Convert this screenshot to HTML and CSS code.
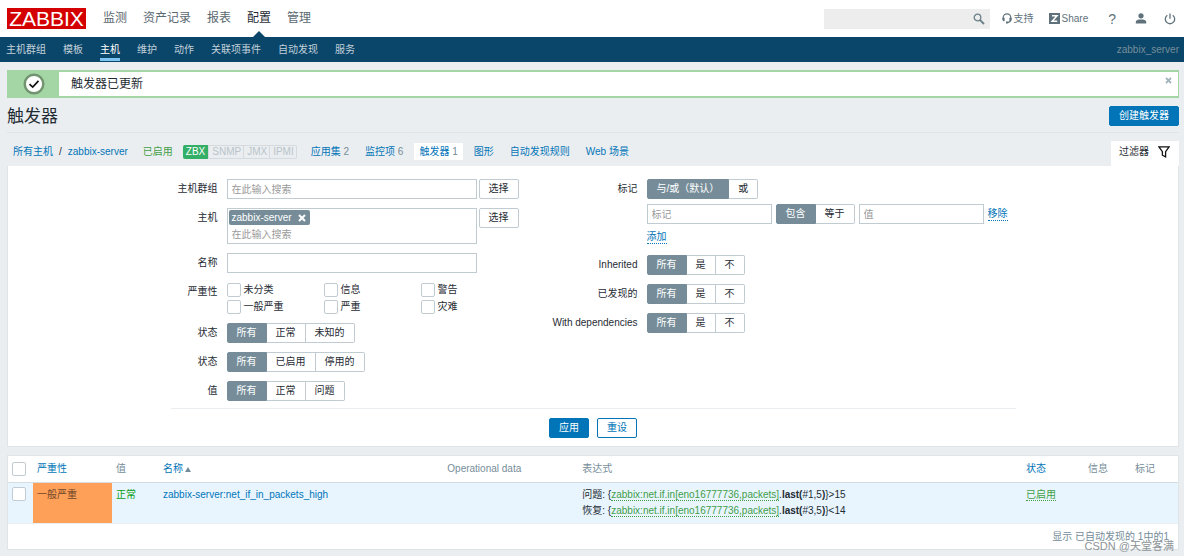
FILE: index.html
```html
<!DOCTYPE html>
<html lang="zh-CN">
<head>
<meta charset="utf-8">
<title>触发器</title>
<link rel="stylesheet" href="styles.css">
</head>
<body>
<header class="top">
  <a class="logo" href="#">ZABBIX</a>
  <nav class="menu">
    <a href="#">监测</a><a href="#">资产记录</a><a href="#">报表</a><a class="current" href="#">配置</a><a href="#">管理</a>
  </nav>
  <form class="search">
    <input type="search" aria-label="搜索">
    <button type="button" aria-label="搜索"><svg width="12" height="12" viewBox="0 0 12 12"><circle cx="4.5" cy="4.5" r="3.3" fill="none" stroke="currentColor" stroke-width="1.3"/><path d="M7 7l4 4" stroke="currentColor" stroke-width="1.8"/></svg></button>
  </form>
  <div class="tools">
    <a href="#"><svg width="10" height="11" viewBox="0 0 10 11"><path d="M1.2 6.5V4.6a3.8 3.8 0 0 1 7.6 0v2.2c0 1.600-1 2.500-3.300 2.700" fill="none" stroke="currentColor" stroke-width="1.200"/><path d="M.4 4.800h2.200v3.400H1.600L.4 7zM7.400 4.800h2.200V7L8.400 8.200h-1zM4 8.600h2.200v1.800H4z" fill="currentColor"/></svg><span>支持</span></a>
    <a href="#"><svg width="11" height="11" viewBox="0 0 11 11"><path fill="currentColor" d="M0 0h11v11H0z"/><path d="M3 2.800h5L3.200 8.200H8.200" fill="none" stroke="#fff" stroke-width="1.500"/></svg><span>Share</span></a>
    <a class="help" href="#" aria-label="帮助">?</a>
    <a href="#" aria-label="用户"><svg width="12" height="11" viewBox="0 0 12 11"><circle cx="6" cy="2.800" r="2.600" fill="currentColor"/><path d="M.8 10.500V8.800C.8 7 3.200 6.500 6 6.500s5.200.5 5.200 2.300v1.700z" fill="currentColor"/></svg></a>
    <a href="#" aria-label="退出"><svg width="12" height="12" viewBox="0 0 12 12"><path d="M3.300 2.200a4.700 4.700 0 1 0 5.400 0M6 .5v5.200" fill="none" stroke="currentColor" stroke-width="1.300"/></svg></a>
  </div>
</header>
<nav class="submenu">
  <a href="#">主机群组</a><a href="#">模板</a><a class="current" href="#">主机</a><a href="#">维护</a><a href="#">动作</a><a href="#">关联项事件</a><a href="#">自动发现</a><a href="#">服务</a>
  <span class="server">zabbix_server</span>
</nav>
<main>
  <div class="message" role="status">
    <div class="message-icon"><svg width="22" height="22" viewBox="0 0 22 22"><circle cx="11" cy="11" r="9.300" fill="#fff" stroke="#71936f" stroke-width="2.400"/><path d="M6.500 11.200l3.200 2.900 5.800-6.300" fill="none" stroke="#111" stroke-width="1.700"/></svg></div>
    <p>触发器已更新</p>
    <button type="button" class="close" aria-label="关闭"><svg width="7" height="7" viewBox="0 0 7 7"><path d="M1 1l5 5M6 1L1 6" stroke="currentColor" stroke-width="1.800"/></svg></button>
  </div>
  <div class="title">
    <h1>触发器</h1>
    <button type="button" class="btn primary">创建触发器</button>
  </div>
  <div class="crumbs">
    <div class="path"><a href="#">所有主机</a><span>/</span><a href="#">zabbix-server</a></div>
    <span class="green">已启用</span>
    <div class="ifaces"><span class="on">ZBX</span><span>SNMP</span><span>JMX</span><span>IPMI</span></div>
    <nav class="links">
      <a href="#">应用集 <b>2</b></a><a href="#">监控项 <b>6</b></a><a class="current" href="#">触发器 <b>1</b></a><a href="#">图形</a><a href="#">自动发现规则</a><a href="#">Web 场景</a>
    </nav>
    <button type="button" class="filter-tab">过滤器<svg width="12" height="12" viewBox="0 0 12 12"><path d="M.9.800h10.200L7.600 5.700v5.200L4.400 9.200V5.700z" fill="none" stroke="#111" stroke-width="1.300"/></svg></button>
  </div>
  <form class="filter">
    <div class="columns">
      <div class="fields">
        <label class="name" for="groups">主机群组</label>
        <div class="line"><div class="multi"><input id="groups" type="text" placeholder="在此输入搜索"></div><button type="button" class="btn plain">选择</button></div>
        <label class="name" for="hosts">主机</label>
        <div class="line"><div class="multi"><span class="tag">zabbix-server<button type="button" aria-label="移除"><svg width="8" height="8" viewBox="0 0 8 8"><path d="M1 1l6 6M7 1L1 7" stroke="currentColor" stroke-width="2"/></svg></button></span><input id="hosts" type="text" placeholder="在此输入搜索"></div><button type="button" class="btn plain">选择</button></div>
        <label class="name" for="name">名称</label>
        <div class="line"><div class="multi"><input id="name" type="text"></div></div>
        <span class="name">严重性</span>
        <div class="checks">
          <label><input type="checkbox">未分类</label><label><input type="checkbox">信息</label><label><input type="checkbox">警告</label>
          <label><input type="checkbox">一般严重</label><label><input type="checkbox">严重</label><label><input type="checkbox">灾难</label>
        </div>
        <span class="name">状态</span>
        <div class="seg"><label><input type="radio" name="state" checked>所有</label><label><input type="radio" name="state">正常</label><label><input type="radio" name="state">未知的</label></div>
        <span class="name">状态</span>
        <div class="seg"><label><input type="radio" name="status" checked>所有</label><label><input type="radio" name="status">已启用</label><label><input type="radio" name="status">停用的</label></div>
        <span class="name">值</span>
        <div class="seg"><label><input type="radio" name="value" checked>所有</label><label><input type="radio" name="value">正常</label><label><input type="radio" name="value">问题</label></div>
      </div>
      <div class="fields right">
        <span class="name">标记</span>
        <div class="tags">
          <div class="seg"><label><input type="radio" name="evaltype" checked>与/或（默认）</label><label><input type="radio" name="evaltype">或</label></div>
          <div class="tag-row">
            <input class="text" type="text" placeholder="标记" aria-label="标记">
            <div class="seg"><label><input type="radio" name="op" checked>包含</label><label><input type="radio" name="op">等于</label></div>
            <input class="text" type="text" placeholder="值" aria-label="值">
            <button type="button" class="link">移除</button>
          </div>
          <button type="button" class="link">添加</button>
        </div>
        <span class="name">Inherited</span>
        <div class="seg"><label><input type="radio" name="inh" checked>所有</label><label><input type="radio" name="inh">是</label><label><input type="radio" name="inh">不</label></div>
        <span class="name">已发现的</span>
        <div class="seg"><label><input type="radio" name="disc" checked>所有</label><label><input type="radio" name="disc">是</label><label><input type="radio" name="disc">不</label></div>
        <span class="name">With dependencies</span>
        <div class="seg"><label><input type="radio" name="dep" checked>所有</label><label><input type="radio" name="dep">是</label><label><input type="radio" name="dep">不</label></div>
      </div>
    </div>
    <div class="actions"><button type="button" class="btn primary">应用</button><button type="button" class="btn outline">重设</button></div>
  </form>
  <div class="list">
    <table>
      <colgroup><col class="c-check"><col class="c-sev"><col class="c-val"><col class="c-name"><col class="c-op"><col class="c-expr"><col class="c-status"><col class="c-small"><col class="c-small"></colgroup>
      <thead><tr>
        <th><input type="checkbox" aria-label="全选"></th><th><a href="#">严重性</a></th><th>值</th><th><a href="#">名称<span class="arrow"></span></a></th><th>Operational data</th><th>表达式</th><th><a href="#">状态</a></th><th>信息</th><th>标记</th>
      </tr></thead>
      <tbody><tr>
        <td><input type="checkbox" aria-label="选择触发器"></td><td class="average">一般严重</td><td class="ok">正常</td><td><a href="#">zabbix-server:net_if_in_packets_high</a></td><td></td>
        <td>问题: {<a class="item" href="#">zabbix:net.if.in[eno16777736,packets]</a>.<b>last(</b>#1,5<b>)</b>}&gt;15<br>恢复: {<a class="item" href="#">zabbix:net.if.in[eno16777736,packets]</a>.<b>last(</b>#3,5<b>)</b>}&lt;14</td>
        <td><a class="item" href="#">已启用</a></td><td></td><td></td>
      </tr></tbody>
    </table>
    <p class="total">显示 已自动发现的 1中的1</p>
  </div>
</main>
<div class="watermark">CSDN @天堂客满</div>
</body>
</html>
```
FILE: styles.css
```css
* { box-sizing: border-box; }
body {
  margin: 0;
  background: #ebeef0;
  color: #1f2c33;
  font: 10px/16px "Liberation Sans", "Noto Sans CJK SC", sans-serif;
  position: relative;
}
a { color: #0275b8; text-decoration: none; }
button, input { font: inherit; color: inherit; margin: 0; }
button { background: none; border: 0; padding: 0; }
svg { display: block; flex: none; }
h1, p { margin: 0; font-weight: normal; }

.top { display: flex; align-items: center; height: 37px; padding: 0 8px 0 7px; background: #fff; }
.logo { background: #d40000; color: #fff; font-size: 21px; line-height: 21px; width: 79px; text-align: center; }
.menu { display: flex; gap: 16px; margin-left: 17px; height: 37px; }
.menu a { color: #5a686f; font-size: 12px; line-height: 37px; display: flex; flex-direction: column; align-items: center; }
.menu .current { color: #1f2c33; }
.menu .current::after { content: ""; margin-top: -6px; border: 6px solid transparent; border-top: 0; border-bottom-color: #0a466a; }
.search { display: flex; align-items: center; width: 166px; height: 20px; margin-left: auto; padding-right: 5px; background: #ededed; color: #6b7f89; }
.search input { flex: 1; min-width: 0; border: 0; background: none; outline: 0; }
.tools { display: flex; align-items: center; margin-left: 12px; }
.tools a { display: flex; align-items: center; gap: 2px; color: #5f727c; margin-right: 15px; }
.tools a:nth-child(2) { margin-right: 20px; }
.tools .help { font-size: 14px; margin-right: 19px; }
.tools a:nth-child(4) { margin-right: 17px; }
.tools a:last-child { margin-right: 0; }

.submenu { display: flex; gap: 17px; height: 25px; padding: 0 5px 0 6px; background: #0a466a; }
.submenu a { color: #c2d1da; line-height: 25px; height: 24px; }
.submenu .current { color: #fff; border-bottom: 3px solid #7dc4f0; }
.submenu .server { margin-left: auto; color: #768d99; line-height: 25px; }

main { padding: 8px 5px 7px 7px; }
.message { display: flex; height: 28px; background: #fff; border: 2px solid #a3d6a4; border-left-width: 1px; border-right-width: 1px; }
.message-icon { width: 51px; display: flex; align-items: center; justify-content: center; background: #a3d6a4; }
.message p { font-size: 12px; line-height: 24px; margin-left: 12px; }
.close { margin-left: auto; align-self: flex-start; padding: 5px 6px; color: #a3b4bd; }
.title { display: flex; align-items: center; justify-content: space-between; height: 35px; padding-top: 2px; border-bottom: 1px solid #dfe4e7; }
h1 { font-size: 17px; line-height: 32px; padding-top: 2px; }

.btn { height: 20px; line-height: 18px; padding: 0 9px; border: 1px solid #0275b8; border-radius: 2px; }
.primary { background: #0275b8; color: #fff; }
.plain { background: #fff; border-color: #c0ccd2; }
.outline { background: #fff; color: #0275b8; }

.crumbs { display: flex; align-items: center; height: 33px; padding: 4px 0 0 6px; }
.path { display: flex; gap: 6px; margin-right: 15px; }
.green { color: #429e47; margin-right: 10px; }
.ifaces { display: flex; border: 1px solid #d5dade; border-left: 0; border-radius: 2px; color: #b8c4ca; line-height: 12px; margin-right: 9px; }
.ifaces span { padding: 0 2px 0 3px; }
.ifaces span + span { border-left: 1px solid #d5dade; }
.ifaces .on { background: #34af67; color: #fff; margin: -1px 0; line-height: 14px; padding: 0 3px; border-radius: 2px 0 0 2px; }
.links { display: flex; gap: 6px; }
.links a { padding: 0 5px; line-height: 17px; }
.links b { font-weight: normal; color: #768d99; }
.links .current { background: #fff; }
.filter-tab { display: flex; align-items: center; gap: 9px; align-self: flex-end; height: 25px; margin-left: auto; padding: 0 9px 4px 8px; background: #fff; }

.filter { background: #fff; padding: 13px 8px 8px; border: 1px solid #dfe4e7; border-top: 0; }
.columns { display: flex; gap: 33px; max-width: 845px; margin: 0 auto; padding-bottom: 7px; border-bottom: 1px solid #ebeef0; }
.fields { display: grid; grid-template-columns: 47px 292px; column-gap: 9px; row-gap: 9px; align-content: start; align-items: start; }
.right { grid-template-columns: 86px 1fr; flex: 1; }
.name { text-align: right; line-height: 20px; white-space: nowrap; }
.line { display: flex; align-items: flex-start; gap: 2px; }
.multi { width: 250px; border: 1px solid #c0ccd2; background: #fff; }
.multi input { display: block; width: 100%; height: 18px; padding: 0 4px; border: 0; background: none; outline: 0; }
::placeholder { color: #9a9a9a; opacity: 1; }
.tag { display: inline-flex; align-items: center; gap: 6px; margin: 1px 1px 0; height: 15px; line-height: 15px; padding: 0 4px 0 3px; background: #768d99; color: #fff; border-radius: 2px; vertical-align: top; }
.checks { display: grid; grid-template-columns: repeat(3, 97px); row-gap: 2px; }
.checks label { display: flex; align-items: center; gap: 3px; line-height: 15px; }
input[type="checkbox"] { appearance: none; display: block; width: 14px; height: 14px; border: 1px solid #c0ccd2; border-radius: 2px; background: #fff; }
.seg { display: flex; }
.seg label { height: 20px; line-height: 18px; padding: 0 9px; border: 1px solid #c0ccd2; background: #fff; white-space: nowrap; }
.seg label + label { border-left: 0; }
.seg label:last-child { border-radius: 0 2px 2px 0; }
.seg label:first-child { border-radius: 2px 0 0 2px; }
.seg label:has(:checked) { background: #768d99; border-color: #768d99; color: #fff; }
.seg input { appearance: none; display: block; width: 0; height: 0; }
.tags { display: grid; row-gap: 5px; justify-items: start; padding-bottom: 2px; }
.tag-row { display: flex; align-items: center; gap: 4px; margin-bottom: 2px; }
.text { width: 125px; height: 20px; padding: 0 4px; border: 1px solid #c0ccd2; background: #fff; }
.link { color: #0275b8; line-height: 12px; border-bottom: 1px dotted #0275b8; white-space: nowrap; }
.actions { display: flex; justify-content: center; gap: 8px; padding-top: 9px; }

.list { margin-top: 8px; background: #fff; border: 1px solid #dfe4e7; }
table { width: 100%; table-layout: fixed; border-collapse: collapse; }
.c-check { width: 25px; }
.c-sev { width: 79px; }
.c-val, .c-small { width: 47px; }
.c-status { width: 62px; }
.c-op { width: 135px; }
.c-name { width: 24.3%; }
th { height: 26px; padding: 0 4px; text-align: left; font-weight: normal; color: #768d99; border-bottom: 1px solid #d5dde1; white-space: nowrap; }
td { height: 40px; padding: 4px; vertical-align: top; background: #e8f5ff; border-bottom: 1px solid #ebeef0; }
.average { background: #ffa059; color: #734828; }
.ok { color: #0a9e20; }
.item { color: #429e47; border-bottom: 1px dotted #429e47; }
.arrow { display: inline-block; margin-left: 2px; border: 3px solid transparent; border-top: 0; border-bottom: 5px solid #768d99; }
.total { text-align: right; padding: 5px 9px 4px; color: #768d99; line-height: 16px; }
.watermark { position: absolute; right: 10px; bottom: 3px; font-size: 11px; line-height: 16px; color: #8d9499; }
```
